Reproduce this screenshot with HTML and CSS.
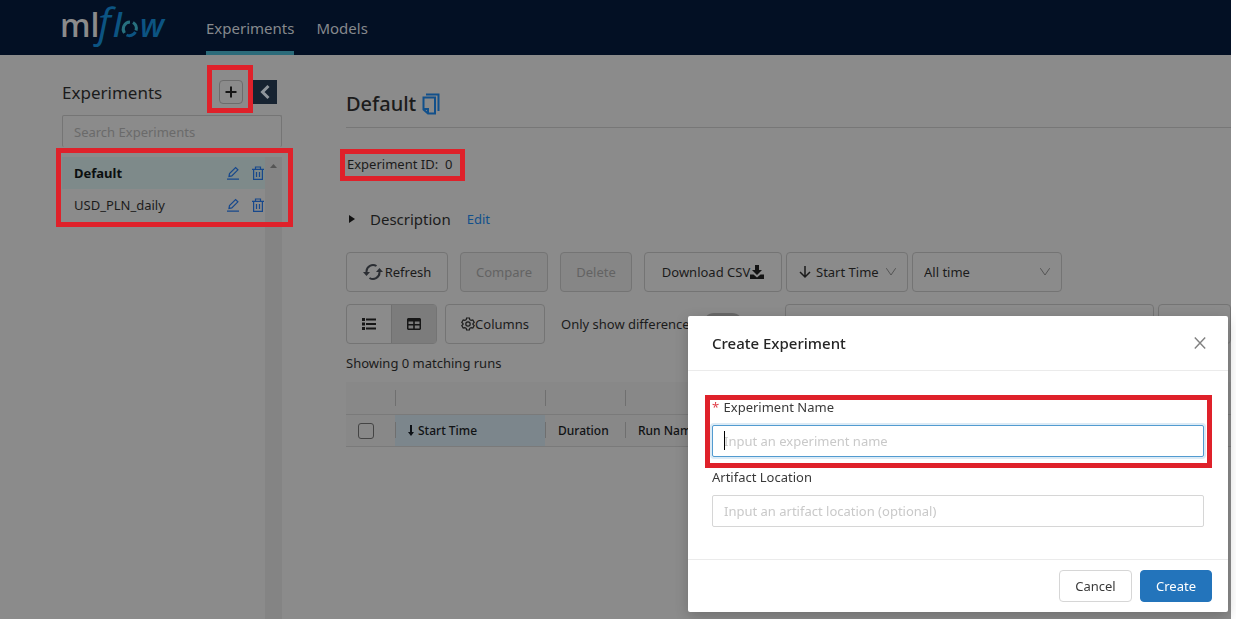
FILE: index.html
```html
<!DOCTYPE html>
<html lang="en">
<head>
<meta charset="utf-8">
<title>MLflow</title>
<link rel="stylesheet" href="styles.css">
</head>
<body>
<svg class="defs" aria-hidden="true">
  <symbol id="pencil" viewBox="0 0 14 14"><path d="M1 13.200h12M3 10.400l.5-2.800L9.600 1.500l2.300 2.300-6.100 6.100z" fill="none" stroke="currentColor" stroke-width="1.2"/></symbol>
  <symbol id="trash" viewBox="0 0 14 14"><path d="M1 3.300h12M4.500 3V1h5v2M2.600 3.500v9.900h8.800V3.500M5.500 6v5M8.500 6v5" fill="none" stroke="currentColor" stroke-width="1.2"/></symbol>
  <symbol id="chevron" viewBox="0 0 12 12"><path d="M1.300 2.200L6 9l4.700-6.800" fill="none" stroke="currentColor"/></symbol>
</svg>
<div class="app">
  <header class="topbar">
    <a class="logo" href="#" aria-label="mlflow">
      <svg width="112" height="55" viewBox="0 0 112 55">
        <text class="logo-text" y="37"><tspan class="logo-ml" x="-2">ml</tspan><tspan class="logo-f" x="36">f</tspan><tspan x="51">l</tspan><tspan x="78">w</tspan></text>
        <path d="M62.500 33a7 7 0 0 1 5.500-11M71 22.500a7 7 0 0 1 3 8" fill="none" stroke="#27707e" stroke-width="3"/>
        <path d="M73.500 32a7 7 0 0 1-9 3" fill="none" stroke="#0c5482" stroke-width="3"/>
      </svg>
    </a>
    <nav class="nav">
      <a class="nav-link active" href="#">Experiments</a>
      <a class="nav-link" href="#">Models</a>
    </nav>
  </header>
  <div class="content">
    <aside class="sidebar">
      <div class="side-head">
        <h2 class="side-title">Experiments</h2>
        <div class="marked mark-add">
          <button class="add" aria-label="New experiment"><svg width="14" height="14" viewBox="0 0 14 14"><path d="M7 1.500v11M1.500 7h11" stroke="#161616" stroke-width="2"/></svg></button>
        </div>
        <button class="collapse" aria-label="Collapse"><svg width="12" height="16" viewBox="0 0 12 16"><path d="M9.500 2L3.500 8l6 6" fill="none" stroke="#8f959b" stroke-width="3"/></svg></button>
      </div>
      <input class="side-search" type="text" placeholder="Search Experiments" aria-label="Search Experiments">
      <div class="list-wrap marked mark-list">
        <ul class="list">
          <li class="item selected"><a class="item-name" href="#">Default</a>
            <button class="icon" aria-label="Rename"><svg width="14" height="14"><use href="#pencil"/></svg></button>
            <button class="icon" aria-label="Delete experiment"><svg width="14" height="14"><use href="#trash"/></svg></button></li>
          <li class="item"><a class="item-name" href="#">USD_PLN_daily</a>
            <button class="icon" aria-label="Rename"><svg width="14" height="14"><use href="#pencil"/></svg></button>
            <button class="icon" aria-label="Delete experiment"><svg width="14" height="14"><use href="#trash"/></svg></button></li>
        </ul>
        <div class="track"><svg width="7" height="4" viewBox="0 0 7 4"><path d="M0 4L3.500 0 7 4z" fill="#555"/></svg></div>
      </div>
      <div class="track-rest"></div>
    </aside>
    <main class="main">
      <div class="title-row">
        <h1 class="title">Default</h1>
        <button class="copy" aria-label="Copy name"><svg width="18" height="22" viewBox="0 0 18 22"><path d="M4 1.500h12.500V18M1.500 4.500H13V20.500H6L1.500 16.500zM1.500 16h4.500v4.500" fill="none" stroke="currentColor" stroke-width="2"/></svg></button>
      </div>
      <div class="id-row"><span class="marked mark-id">Experiment ID:&nbsp; 0</span></div>
      <div class="desc-row">
        <svg class="caret-right" width="6" height="8" viewBox="0 0 6 8"><path d="M0 0l6 4-6 4z" fill="#111"/></svg>
        <span class="desc">Description</span>
        <a class="edit" href="#">Edit</a>
      </div>
      <div class="toolbar">
        <button class="btn refresh"><svg width="20" height="18" viewBox="0 0 20 18"><path d="M3.500 10V8.500A6.500 6.500 0 0 1 13.500 3M16.500 8v1.500A6.500 6.500 0 0 1 6.500 15" fill="none" stroke="#2b2e33" stroke-width="2"/><path d="M0 9h7l-3.500 4zM13 9h7l-3.500-4z" fill="#2b2e33"/></svg>Refresh</button>
        <button class="btn compare" disabled>Compare</button>
        <button class="btn delete" disabled>Delete</button>
        <button class="btn download">Download CSV<svg width="14" height="14" viewBox="0 0 14 14"><path d="M5 0h4v5h3L7 10 2 5h3zM0 9.500h3.500L7 12.500l3.500-3H14V14H0z" fill="#141414"/></svg></button>
        <div class="select-box sort">
          <svg class="sort-arrow" width="12" height="14" viewBox="0 0 12 14"><path d="M6 1v11M1 7l5 5 5-5" fill="none" stroke="#1b1b1b" stroke-width="1.500"/></svg>
          <select class="select" aria-label="Sort by"><option>Start Time</option></select>
          <svg class="chev" width="12" height="12"><use href="#chevron"/></svg>
        </div>
        <div class="select-box time">
          <select class="select" aria-label="Time range"><option>All time</option></select>
          <svg class="chev" width="12" height="12"><use href="#chevron"/></svg>
        </div>
      </div>
      <div class="toolbar second">
        <div class="views">
          <button class="view" aria-label="List view"><svg width="14" height="12" viewBox="0 0 14 12"><path d="M4 1.500h10M4 6h10M4 10.500h10" stroke="#161616" stroke-width="2"/><path d="M0 0h3v3H0zM0 4.500h3v3H0zM0 9h3v3H0z" fill="#161616"/></svg></button>
          <button class="view on" aria-label="Table view"><svg width="14" height="12" viewBox="0 0 14 12"><path d="M1 0h12l1 1v10l-1 1H1l-1-1V1zM1.500 3.500v2.500h4.700V3.500zM7.800 3.500v2.500h4.700V3.500zM1.500 7.500v3h4.700v-3zM7.800 7.500v3h4.700v-3z" fill="#161616" fill-rule="evenodd"/></svg></button>
        </div>
        <button class="btn columns"><svg width="14" height="14" viewBox="0 0 14 14"><path d="M5.600 1h2.800l.4 1.700 1.300.7 1.700-.5 1.400 2.400L12 6.500v1l1.200 1.200-1.400 2.400-1.700-.5-1.300.7-.4 1.700H5.600l-.4-1.700-1.300-.7-1.700.5L.8 8.700 2 7.500v-1L.8 5.300l1.400-2.400 1.700.5 1.300-.7z" fill="none" stroke="#1b1b1b" stroke-width="1.2"/><circle cx="7" cy="7" r="2.200" fill="none" stroke="#1b1b1b" stroke-width="1.2"/></svg>Columns</button>
        <label class="diff" for="diff">Only show differences</label>
        <input class="switch" id="diff" type="checkbox" role="switch">
        <input class="query" type="text" aria-label="Search runs">
        <button class="btn search" aria-label="Search"></button>
      </div>
      <p class="count">Showing 0 matching runs</p>
      <table class="runs">
        <colgroup><col class="c-check"><col class="c-start"><col class="c-dur"><col></colgroup>
        <thead>
          <tr class="groups"><td></td><td></td><td></td><td></td></tr>
          <tr class="heads">
            <th><input class="check" type="checkbox" aria-label="Select all"></th>
            <th class="sorted"><svg width="6" height="11" viewBox="0 0 6 11"><path d="M2 0h2v7h2l-3 4-3-4h2z" fill="#0d1116"/></svg>Start Time</th>
            <th>Duration</th>
            <th>Run Name</th>
          </tr>
        </thead>
      </table>
    </main>
  </div>
</div>
<section class="modal" role="dialog" aria-labelledby="modal-title">
  <header class="modal-head">
    <h2 class="modal-title" id="modal-title">Create Experiment</h2>
    <button class="close" aria-label="Close"><svg width="12" height="12" viewBox="0 0 12 12"><path d="M.8.5l10.400 11M11.200.5L.8 11.500" stroke="#808080" stroke-width="1.400"/></svg></button>
  </header>
  <form class="form">
    <div class="field marked mark-name">
      <label class="label" for="name"><span class="req">*</span> Experiment Name</label>
      <div class="input-box"><input class="input focused" id="name" type="text" placeholder="Input an experiment name"><span class="cursor"></span></div>
    </div>
    <div class="field">
      <label class="label" for="location">Artifact Location</label>
      <input class="input" id="location" type="text" placeholder="Input an artifact location (optional)">
    </div>
  </form>
  <footer class="modal-foot">
    <button class="foot-btn">Cancel</button>
    <button class="foot-btn primary">Create</button>
  </footer>
</section>
</body>
</html>
```
FILE: styles.css
```css
* { box-sizing: border-box; }
body { margin: 0; padding-right: 5px; background: #fff; font: 13px/20px "Noto Sans", "Open Sans", sans-serif; color: #1b1b1b; overflow: hidden; }
button, input, select { font: inherit; color: inherit; margin: 0; }
button { padding: 0; border: 0; background: none; }
a { text-decoration: none; color: inherit; }
h1, h2, p, ul { margin: 0; padding: 0; font-weight: 400; }
svg { display: block; flex: none; }
.defs { display: none; }

.app { min-height: 100vh; background: #8b8b8b; display: flex; flex-direction: column; }
.topbar { height: 55px; background: #031024; display: flex; padding-left: 62px; }
.logo { width: 144px; }
.logo svg { overflow: visible; }
.logo-text { font: italic 600 32px "Open Sans", sans-serif; fill: #0c5482; }
.logo-ml { font-style: normal; fill: #8b8b8b; }
.logo-f { font-size: 41px; font-weight: 500; }
.nav { display: flex; gap: 22px; }
.nav-link { font-size: 15px; line-height: 56px; height: 55px; color: #86898d; }
.nav-link.active { border-bottom: 4px solid #2b6b7a; }

.content { flex: 1; display: flex; gap: 64px; padding-left: 62px; }
.sidebar { width: 220px; flex: none; display: flex; flex-direction: column; padding-top: 23px; }
.side-head { display: flex; align-items: center; height: 28px; margin-bottom: 9px; padding-right: 5px; }
.side-title { flex: 1; font-size: 17px; padding-top: 2px; }
.add { width: 24px; height: 24px; border: 1px solid #6c6c6c; border-radius: 4px; display: grid; place-items: center; }
.collapse { width: 24px; height: 24px; margin-left: 10px; background: #172331; display: grid; place-items: center; }
.side-search { height: 32px; width: 100%; border: 1px solid #757575; border-bottom: 0; border-radius: 2px; background: none; padding: 0 11px; }
.side-search::placeholder { color: #6a6a6a; }

.marked { position: relative; }
.marked::after { content: ""; position: absolute; border: 5px solid #df212a; pointer-events: none; z-index: 1; }
.mark-add::after { inset: -15px -10px -9px -12px; }
.mark-list::after { inset: -9px -11px -6px -6px; }
.mark-id::after { inset: -6px -13px -8px -7px; }
.mark-name::after { inset: -2px -8px -11px -7px; }

.list-wrap { display: flex; margin-top: 10px; }
.list { flex: 1; list-style: none; }
.item { display: flex; align-items: center; height: 32px; padding-left: 12px; }
.item.selected { background: #7e8a8a; font-weight: 700; color: #0b0f0f; }
.item-name { flex: 1; }
.icon { width: 14px; margin-right: 11px; color: #17488c; }
.icon:last-child { margin-right: 0; }
.track { width: 17px; background: #848484; padding: 7px 5px; }
.track-rest { flex: 1; width: 17px; align-self: flex-end; background: #848484; }

.main { flex: 1; min-width: 0; padding-top: 32px; }
.title-row { display: flex; align-items: center; gap: 6px; height: 41px; padding-bottom: 7px; border-bottom: 1px solid #777; }
.title { font-size: 20px; font-weight: 500; }
.copy { color: #12508b; }
.id-row { margin-top: 26px; padding-left: 1px; }
.desc-row { display: flex; align-items: center; margin-top: 35px; padding-left: 3px; height: 20px; }
.desc { font-size: 15px; margin: 0 16px 0 15px; }
.edit { color: #12508b; }
.toolbar { display: flex; margin-top: 23px; }
.toolbar.second { margin-top: 12px; }
.btn { height: 40px; border: 1px solid #747474; border-radius: 4px; display: flex; align-items: center; justify-content: center; white-space: nowrap; flex: none; }
.btn:disabled { background: #868686; color: #636363; }
.refresh { width: 102px; margin-right: 12px; gap: 2px; }
.compare { width: 88px; margin-right: 12px; }
.delete { width: 72px; margin-right: 12px; }
.download { width: 138px; margin-right: 4px; }
.select-box { position: relative; height: 40px; border: 1px solid #747474; border-radius: 4px; flex: none; }
.select { appearance: none; width: 100%; height: 100%; border: 0; background: none; padding: 0 11px; }
.sort { width: 122px; margin-right: 4px; }
.sort .select { padding-left: 29px; }
.time { width: 150px; }
.sort-arrow { position: absolute; left: 12px; top: 12px; }
.chev { position: absolute; right: 10px; top: 13px; color: #555; }
.views { display: flex; width: 91px; height: 40px; border: 1px solid #747474; border-radius: 4px; margin-right: 8px; flex: none; }
.view { flex: 1; display: grid; place-items: center; }
.view.on { background: #7c7c7c; border-left: 1px solid #707070; }
.columns { width: 100px; margin-right: 16px; }
.diff { width: 142px; line-height: 40px; white-space: nowrap; flex: none; }
.switch { appearance: none; width: 40px; height: 22px; border-radius: 11px; background: #696969; margin: 9px 42px 0 0; flex: none; }
.query { flex: 1; min-width: 0; height: 40px; border: 1px solid #747474; border-radius: 4px; background: none; margin-right: 4px; padding: 0 11px; }
.search { width: 73px; }
.count { margin-top: 9px; }

.runs { width: 100%; margin-top: 9px; border-collapse: collapse; table-layout: fixed; background: #888; }
.c-check { width: 49px; }
.c-start { width: 150px; }
.c-dur { width: 80px; }
.runs tr { height: 32px; border-bottom: 1px solid #7a7a7a; }
.runs td, .runs th { padding: 2px 12px 0 13px; text-align: left; font-size: 12px; font-weight: 500; color: #101214; white-space: nowrap; background: linear-gradient(#6f6f6f, #6f6f6f) left center / 1px 16px no-repeat; }
.runs td:first-child, .runs th:first-child { background: none; padding-left: 12px; }
.runs .sorted { background-color: #7c868c; }
.sorted svg { display: inline-block; margin-right: 4px; vertical-align: -1px; }
.check { appearance: none; display: block; width: 16px; height: 16px; border: 1px solid #444; border-radius: 3px; }

.modal { position: fixed; right: 8px; bottom: 7px; width: 540px; background: #fff; border-radius: 2px; box-shadow: 0 4px 14px rgba(0, 0, 0, .2); color: #3a3a3a; }
.modal-head { display: flex; align-items: center; justify-content: space-between; height: 55px; padding: 0 22px 0 24px; border-bottom: 1px solid #ebebeb; }
.modal-title { font-size: 15px; font-weight: 500; color: #262626; }
.form { padding: 26px 24px 32px; }
.field { margin-bottom: 10px; }
.field:last-child { margin-bottom: 0; }
.label { display: block; line-height: 20px; margin-bottom: 8px; }
.req { color: #e0414a; margin-right: 1px; }
.input-box { position: relative; }
.input { display: block; width: 100%; height: 32px; border: 1px solid #d6d6d6; border-radius: 2px; padding: 0 11px; background: #fff; }
.input::placeholder { color: #c9c9c9; }
.input.focused { border-color: #529bd0; box-shadow: 0 0 0 2px #dcebf6; }
.cursor { position: absolute; left: 12px; top: 6px; width: 1px; height: 19px; background: #000; }
.modal-foot { display: flex; justify-content: flex-end; gap: 8px; padding: 10px 16px; border-top: 1px solid #ebebeb; }
.foot-btn { width: 73px; height: 32px; border: 1px solid #d6d6d6; border-radius: 4px; }
.foot-btn.primary { width: 72px; border-color: #2374bb; background: #2374bb; color: #fff; }
```
